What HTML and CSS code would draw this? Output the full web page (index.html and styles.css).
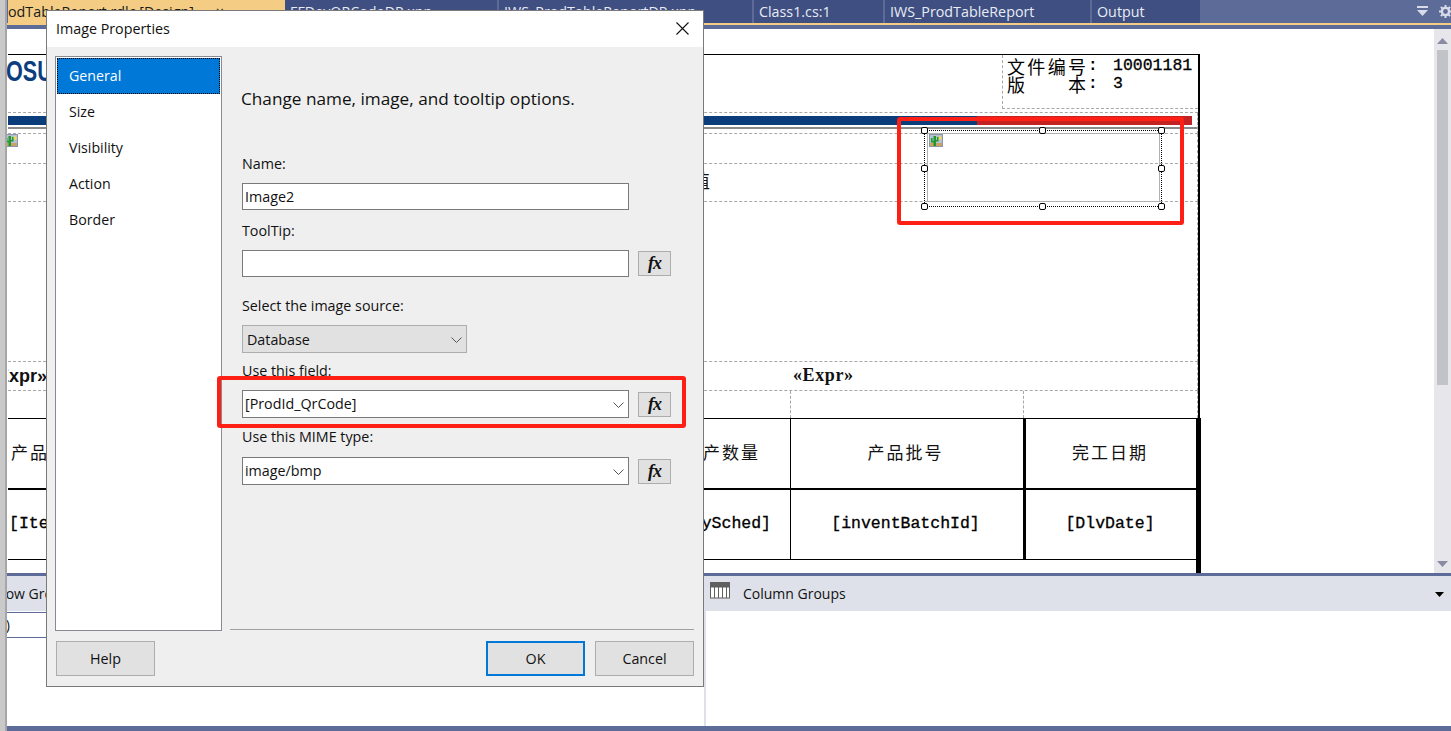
FILE: index.html
```html
<!DOCTYPE html>
<html lang="en">
<head>
<meta charset="utf-8">
<title>Image Properties</title>
<link rel="stylesheet" href="styles.css">
</head>
<body>
<div class="app">
  <div class="strip"></div>
  <div class="main">
    <div class="tabs">
      <div class="tab tab-active tab-1">odTableReport.rdlc [Design] → ×</div>
      <div class="tab tab-2">FFDevQRCodeDP.xpp</div>
      <div class="tab tab-3">IWS_ProdTableReportDP.xpp</div>
      <div class="tab tab-4">Class1.cs:1</div>
      <div class="tab tab-5">IWS_ProdTableReport</div>
      <div class="tab tab-6">Output</div>
      <div class="tab-tools">
        <svg class="tool-drop" width="11" height="10" viewBox="0 0 11 10"><rect x="0" y="0" width="11" height="2" fill="#d8dbe8"/><path d="M0 4h11L5.500 10z" fill="#d8dbe8"/></svg>
        <svg class="tool-gear" width="13" height="13" viewBox="0 0 13 13"><circle cx="6.500" cy="6.500" r="3.600" fill="none" stroke="#d8dbe8" stroke-width="2.400"/><path d="M6.500 0v13M0 6.500h13M1.900 1.900l9.200 9.200M11.100 1.900l-9.200 9.200" stroke="#d8dbe8" stroke-width="2" stroke-dasharray="2.200 8.600"/></svg>
      </div>
    </div>
    <div class="workspace">
      <div class="canvas">
        <div class="report">
          <div class="r-head">
            <div class="logo">OSU</div>
            <div class="filebox">
              <div class="fb-line"><span class="fb-label"><span>文</span><span>件</span><span>编</span><span>号</span></span><span class="fb-colon">:</span><span class="fb-value">10001181</span></div>
              <div class="fb-line"><span class="fb-label"><span>版</span><span>本</span></span><span class="fb-colon">:</span><span class="fb-value">3</span></div>
            </div>
          </div>
          <div class="r-band">
            <div class="band-bar"><div class="band-red"></div></div>
            <div class="band-line"></div>
          </div>
          <div class="r-row r-row-a">
            <svg class="pic pic-left" width="14" height="13" viewBox="0 0 14 13"><rect width="14" height="13" fill="#b4c0d4"/><rect x="0.500" y="0.500" width="13" height="12" fill="none" stroke="#8d97a8"/><path d="M1 9h12v3H1z" fill="#c9a268"/><circle cx="11" cy="4" r="1.800" fill="#f4dc55"/><path d="M4.500 12V2H7v10zM2 4h1.500v3H4.500v1.500H2zM8 3h1.500v4.500H7V6h1z" fill="#1f9a2a"/></svg>
          </div>
          <div class="r-row r-row-b"><span class="clip-cn">字段值</span></div>
          <div class="r-row r-row-c"></div>
          <div class="r-row r-row-d">
            <div class="expr-a">«Expr»</div>
            <div class="expr-b">«Expr»</div>
          </div>
          <div class="r-row r-row-e"><div class="e-a"></div><div class="e-b"></div><div class="e-c"></div></div>
          <div class="r-table">
            <div class="t-row t-head">
              <div class="t-cell t-a">产品编码</div>
              <div class="t-cell t-b">生产数量</div>
              <div class="t-cell t-c">产品批号</div>
              <div class="t-cell t-d">完工日期</div>
            </div>
            <div class="t-row t-data">
              <div class="t-cell t-a mono">[ItemId]</div>
              <div class="t-cell t-b t-b2 mono">[QtySched]</div>
              <div class="t-cell t-c mono">[inventBatchId]</div>
              <div class="t-cell t-d mono">[DlvDate]</div>
            </div>
            <div class="t-rest"></div>
          </div>
          <div class="selection">
            <div class="sel-inner">
              <svg class="pic" width="14" height="13" viewBox="0 0 14 13"><rect width="14" height="13" fill="#b4c0d4"/><rect x="0.500" y="0.500" width="13" height="12" fill="none" stroke="#8d97a8"/><path d="M1 9h12v3H1z" fill="#c9a268"/><circle cx="11" cy="4" r="1.800" fill="#f4dc55"/><path d="M4.500 12V2H7v10zM2 4h1.500v3H4.500v1.500H2zM8 3h1.500v4.500H7V6h1z" fill="#1f9a2a"/></svg>
            </div>
            <i class="h h-tl"></i><i class="h h-tc"></i><i class="h h-tr"></i>
            <i class="h h-ml"></i><i class="h h-mr"></i>
            <i class="h h-bl"></i><i class="h h-bc"></i><i class="h h-br"></i>
          </div>
          <div class="red-box red-report"></div>
        </div>
      </div>
      <div class="scrollbar">
        <svg class="sb-arrow" width="11" height="6" viewBox="0 0 11 6"><path d="M5.500 0L11 6H0z" fill="#8a8ba3"/></svg>
        <div class="sb-track"><div class="sb-thumb"></div></div>
        <svg class="sb-arrow" width="11" height="6" viewBox="0 0 11 6"><path d="M0 0h11L5.500 6z" fill="#8a8ba3"/></svg>
      </div>
    </div>
    <div class="panels">
      <div class="panel panel-left">
        <div class="panel-head"><span class="row-groups">Row Groups</span></div>
        <div class="panel-row"><span class="row-static">(Details)</span></div>
      </div>
      <div class="panel panel-right">
        <div class="panel-head">
          <svg class="col-icon" width="20" height="19" viewBox="0 0 20 19"><rect x="0" y="0" width="20" height="5" fill="#5f5f5f"/><rect x="0.500" y="5" width="19" height="11" fill="#fff" stroke="#5f5f5f"/><path d="M4.500 5v11M8.500 5v11M12.500 5v11M16.500 5v11" stroke="#5f5f5f"/></svg>
          <span class="col-groups">Column Groups</span>
          <svg class="panel-drop" width="9" height="5" viewBox="0 0 9 5"><path d="M0 0h9L4.500 5z" fill="#000"/></svg>
        </div>
      </div>
    </div>
    <div class="footer-bar"></div>
  </div>

  <div class="dialog">
    <div class="dlg-title">
      <span>Image Properties</span>
      <svg class="dlg-close" width="13" height="13" viewBox="0 0 13 13"><path d="M0.500 0.500l12 12M12.500 0.500l-12 12" stroke="#111" stroke-width="1.100"/></svg>
    </div>
    <div class="dlg-body">
      <div class="dlg-main">
        <ul class="nav">
          <li class="nav-item nav-active">General</li>
          <li class="nav-item">Size</li>
          <li class="nav-item">Visibility</li>
          <li class="nav-item">Action</li>
          <li class="nav-item">Border</li>
        </ul>
        <div class="dlg-right">
          <div class="form">
            <div class="heading">Change name, image, and tooltip options.</div>
            <div class="label label-name">Name:</div>
            <div class="field"><div class="input">Image2</div></div>
            <div class="label label-tip">ToolTip:</div>
            <div class="field"><div class="input"></div><div class="fx">fx</div></div>
            <div class="label label-source">Select the image source:</div>
            <div class="combo">Database
              <svg class="chev" width="11" height="6" viewBox="0 0 11 6"><path d="M0.500 0.500l5 5 5-5" fill="none" stroke="#555"/></svg>
            </div>
            <div class="label label-usefield">Use this field:</div>
            <div class="field"><div class="input input-tall">[ProdId_QrCode]<svg class="chev" width="11" height="6" viewBox="0 0 11 6"><path d="M0.500 0.500l5 5 5-5" fill="none" stroke="#555"/></svg></div><div class="fx">fx</div></div>
            <div class="label label-mime">Use this MIME type:</div>
            <div class="field"><div class="input input-tall">image/bmp<svg class="chev" width="11" height="6" viewBox="0 0 11 6"><path d="M0.500 0.500l5 5 5-5" fill="none" stroke="#555"/></svg></div><div class="fx">fx</div></div>
          </div>
          <div class="sep"></div>
        </div>
      </div>
      <div class="dlg-foot">
        <div class="btn">Help</div>
        <div class="foot-right">
          <div class="btn btn-primary">OK</div>
          <div class="btn">Cancel</div>
        </div>
      </div>
    </div>
    <div class="red-box red-field"></div>
  </div>
</div>
</body>
</html>
```

FILE: styles.css
```css
* { box-sizing: border-box; }
html, body { margin: 0; padding: 0; height: 100%; overflow: hidden; background: #fff; }
body { font-family: "Open Sans", "Noto Sans", sans-serif; color: #111; }

.app { position: relative; display: flex; width: 1451px; height: 731px; overflow: hidden; }
.strip { width: 7px; flex: none; background: #c9c9c9; border-right: 2px solid #a6a6a6; }
.main { width: 1444px; display: flex; flex-direction: column; }

/* tabs */
.tabs { height: 29px; flex: none; display: flex; background: #5d6b98; border-bottom: 4px solid #5d6b98; box-shadow: inset 0 -2px 0 #f5cc84; padding-bottom: 2px; font-size: 14.300px; }
.tab { height: 23px; line-height: 23px; background: #3f4f81; color: #e8ecf5; padding-left: 5px; white-space: nowrap; overflow: hidden; flex: none; margin-right: 2px; }
.tab-active { background: #f5cc84; color: #1a1a1a; margin-left: 1px; padding-left: 0; margin-right: 0; }
.tab-1 { width: 277px; }
.tab-2 { width: 212px; }
.tab-3 { width: 253px; }
.tab-4 { width: 129px; }
.tab-5 { width: 205px; }
.tab-6 { width: 108px; margin-right: 0; }
.tab-tools { flex: 1; display: flex; justify-content: flex-end; align-items: flex-start; gap: 11px; padding-top: 5px; overflow: hidden; }
.tool-gear { margin-right: -1px; flex: none; }
.tool-drop { margin-top: 1px; flex: none; }

/* design surface */
.workspace { height: 544px; flex: none; display: flex; }
.canvas { flex: 1; overflow: hidden; background: #fff; }
.scrollbar { width: 17px; flex: none; background: #e6e6eb; display: flex; flex-direction: column; align-items: center; padding: 9px 0 6px; }
.sb-track { flex: 1; width: 100%; padding: 6px 3px 0; }
.sb-thumb { height: 335px; background: #c2c3c9; }
.sb-arrow { flex: none; }

.report { position: relative; margin: 25px 0 0 1px; width: 1192px; border-top: 1px solid #000; border-right: 2px solid #000; }

.r-head { height: 58px; border-bottom: 1px dashed #a8a8a8; display: flex; justify-content: space-between; }
.logo { font: bold 30px/26px "Liberation Sans", sans-serif; color: #0b3d7f; margin: 3px 0 0 -2px; transform: scaleX(0.72); transform-origin: 0 0; }
.filebox { width: 196px; height: 54px; border-left: 1px dashed #a8a8a8; border-bottom: 1px dashed #a8a8a8; padding: 2px 0 0 4px; font: 16px/18px "Noto Sans CJK SC", "Liberation Mono", monospace; color: #000; }
.fb-line { display: flex; height: 18px; }
.fb-label { width: 79px; display: flex; justify-content: space-between; flex: none; font-size: 18px; }
.fb-colon { width: 27px; flex: none; padding-left: 2px; font-family: "Liberation Mono", monospace; font-weight: bold; }
.fb-value { font: 16.500px/18px "Liberation Mono", monospace; -webkit-text-stroke: 0.300px #000; }

.r-band { height: 21px; padding-top: 3px; border-bottom: 1px dashed #a8a8a8; border-right: 1px dashed #a8a8a8; }
.band-bar { height: 9px; width: 1184px; background: #0a3d7a; display: flex; justify-content: flex-end; }
.band-red { width: 215px; background: #c42222; }
.band-line { height: 2px; margin-top: 2px; width: 1189px; background: #8a8a8a; }

.r-row { border-bottom: 1px dashed #a8a8a8; border-right: 1px dashed #a8a8a8; position: relative; }
.r-row-a { height: 30px; }
.r-row-b { height: 38px; display: flex; align-items: center; justify-content: flex-end; padding: 0 487px 6px 0; font: 18px/20px "Noto Sans CJK SC", sans-serif; }
.r-row-c { height: 160px; }
.r-row-d { height: 29px; display: flex; }
.expr-a { width: 783px; font: bold 18px/28px "Liberation Sans", sans-serif; text-indent: -21px; overflow: hidden; }
.expr-b { padding-left: 2px; font: bold 18px/26px "Liberation Serif", serif; letter-spacing: 0.600px; }
.r-row-e { height: 27px; display: flex; border-bottom: 0; }
.e-a { width: 783px; border-right: 1px dashed #a8a8a8; }
.e-b { width: 233px; border-right: 1px dashed #a8a8a8; }
.e-c { flex: 1; }
.pic { display: block; }
.pic-left { position: absolute; left: -4px; top: 0; }

.r-table { border-top: 1px solid #000; margin-right: -2px; width: 1193px; border-right: 5px solid #000; }
.t-row { display: grid; grid-template-columns: 392px 391px 235px 1fr; }
.t-head { height: 71px; border-bottom: 2px solid #000; }
.t-data { height: 70px; border-bottom: 1px solid #000; }
.t-cell { display: flex; align-items: center; justify-content: center; padding-bottom: 4px; font: 17px/20px "Noto Sans CJK SC", sans-serif; letter-spacing: 2px; color: #111; white-space: nowrap; }
.t-a { justify-content: flex-start; padding-left: 3px; }
.t-b { justify-content: flex-end; padding-right: 30px; border-right: 1px solid #000; }
.t-c { border-right: 3px solid #000; padding-right: 3px; }
.t-d { padding-right: 2px; }
.t-b2 { padding-right: 19px; }
.mono { font: 16.500px/20px "Liberation Mono", monospace; letter-spacing: 0; color: #000; -webkit-text-stroke: 0.300px #000; padding-bottom: 2px; }
.t-a.mono { padding-left: 1px; }
.t-rest { height: 14px; }

.selection { position: absolute; left: 916px; top: 75px; width: 238px; height: 77px; border: 1px dotted #000; }
.sel-inner { position: absolute; left: 2px; top: 2px; right: 1px; bottom: 4px; border: 1px solid #b0b0b0; padding: 0 0 0 1px; }
.h { position: absolute; width: 7px; height: 7px; background: #fff; border: 1px solid #000; border-radius: 2px; }
.h-tl, .h-ml, .h-bl { left: -4px; }
.h-tc, .h-bc { left: 114px; }
.h-tr, .h-mr, .h-br { right: -4px; }
.h-tl, .h-tc, .h-tr { top: -4px; }
.h-ml, .h-mr { top: 34px; }
.h-bl, .h-bc, .h-br { bottom: -4px; }

.red-box { position: absolute; border: 4px solid #ff2015; border-radius: 3px; pointer-events: none; }
.red-report { left: 889px; top: 62px; width: 287px; height: 108px; }
.red-field { left: 170px; top: 365px; width: 469px; height: 52px; }

/* bottom panels */
.panels { height: 153px; flex: none; display: flex; border-top: 3px solid #5d6b98; }
.panel { height: 100%; overflow: hidden; background: #fff; }
.panel-left { width: 698px; flex: none; }
.panel-right { flex: 1; border-left: 2px solid #dee1e9; margin-left: -1px; }
.panel-head { height: 35px; background: #dee1e9; display: flex; align-items: center; font-size: 14px; }
.row-groups { margin-left: -10px; white-space: nowrap; }
.panel-row { height: 26px; border-top: 1px solid #5d6b98; border-bottom: 1px solid #5d6b98; margin-top: 1px; font-size: 14px; line-height: 24px; text-indent: -50px; overflow: hidden; }
.col-icon { margin: -5px 0 0 4px; flex: none; }
.col-groups { margin-left: 13px; }
.panel-drop { margin: 2px 7px 0 auto; flex: none; }
.footer-bar { height: 5px; flex: none; background: #5d6b98; }

/* dialog */
.dialog { position: absolute; left: 46px; top: 10px; width: 658px; height: 677px; border: 1px solid #7a7a7a; background: #efefef; display: flex; flex-direction: column; }
.dlg-title { height: 36px; flex: none; background: #fff; display: flex; align-items: center; justify-content: space-between; padding: 0 14px 2px 9px; font-size: 14.300px; }
.dlg-close { flex: none; }
.dlg-body { flex: 1; padding: 9px 9px 10px 8px; display: flex; flex-direction: column; }
.dlg-main { height: 575px; flex: none; display: flex; }
.nav { list-style: none; margin: 0; padding: 1px; width: 167px; flex: none; background: #fff; border: 1px solid #8a8a94; font-size: 14.200px; }
.nav-item { height: 36px; line-height: 36px; padding-left: 12px; }
.nav-active { background: #0078d7; color: #fff; outline: 1px dotted #000; outline-offset: -1px; }
.dlg-right { flex: 1; display: flex; flex-direction: column; padding-left: 8px; }
.form { flex: 1; padding-left: 12px; }
.sep { height: 1px; background: #a0a0a0; margin-bottom: 1px; }
.heading { font-size: 17.200px; line-height: 22px; margin: 32px 0 0 -1px; white-space: nowrap; }
.label { font-size: 14.300px; line-height: 20px; margin-top: 10px; margin-bottom: 10px; white-space: nowrap; }
.label-name { margin-top: 44px; margin-bottom: 9px; }
.label-tip { margin-top: 11px; margin-bottom: 9px; }
.label-source { margin-top: 19px; margin-bottom: 9px; }
.label-usefield { margin-top: 8px; margin-bottom: 9px; }
.label-mime { margin-top: 9px; }
.field { display: flex; align-items: center; gap: 9px; }
.input { position: relative; width: 387px; height: 27px; background: #fff; border: 1px solid #7a7a7a; padding-left: 2px; font-size: 14.300px; line-height: 25px; white-space: nowrap; }
.input-tall { height: 28px; line-height: 26px; }
.combo { position: relative; width: 225px; height: 28px; background: #e1e1e1; border: 1px solid #adadad; padding-left: 4px; font-size: 14.300px; line-height: 28px; }
.chev { position: absolute; right: 4px; top: 11px; }
.fx { width: 33px; height: 25px; background: #e1e1e1; border: 1px solid #adadad; font: italic bold 18px/22px "Liberation Serif", serif; letter-spacing: -1px; text-align: center; color: #111; flex: none; }
.dlg-foot { margin-top: 10px; height: 35px; display: flex; justify-content: space-between; padding-left: 1px; }
.foot-right { display: flex; gap: 10px; }
.btn { width: 99px; height: 35px; background: #e1e1e1; border: 1px solid #adadad; font-size: 14.300px; line-height: 33px; text-align: center; }
.btn-primary { border: 2px solid #0078d7; line-height: 31px; }
```
